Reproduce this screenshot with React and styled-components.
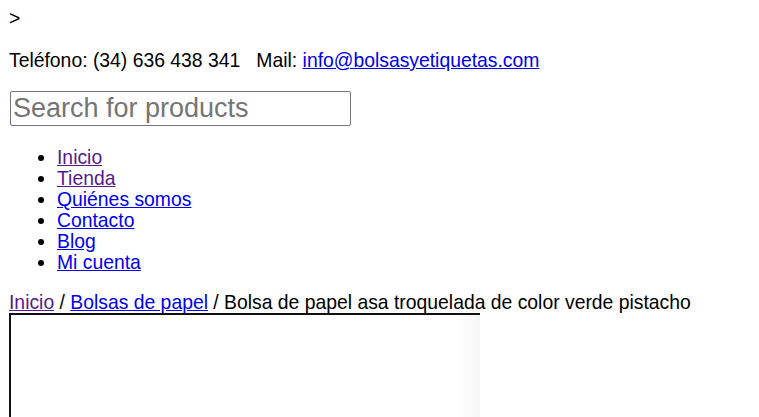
import React from 'react';
import styled, { createGlobalStyle } from 'styled-components';

const GlobalStyle = createGlobalStyle`
  body {
    margin: 8px;
    background: #fff;
    color: #000;
    font-family: "Liberation Sans", Arial, sans-serif;
    font-size: 19.35px;
    line-height: 21px;
  }
`;

const navItems = [
  { label: 'Inicio', visited: true },
  { label: 'Tienda', visited: true },
  { label: 'Quiénes somos' },
  { label: 'Contacto' },
  { label: 'Blog' },
  { label: 'Mi cuenta' },
];

const App = () => {
  return (
    <>
      <GlobalStyle />
      <Header>
        <Toggle>&gt;</Toggle>
        <Contact>
          Teléfono: (34) 636 438 341{'\u00a0\u00a0\u00a0'}Mail:{' '}
          <Link href="#">info@bolsasyetiquetas.com</Link>
        </Contact>
        <SearchForm onSubmit={(e) => e.preventDefault()}>
          <SearchInput type="search" placeholder="Search for products" />
        </SearchForm>
        <NavList>
          {navItems.map((item) => (
            <li key={item.label}>
              <Link href="#" $visited={item.visited}>
                {item.label}
              </Link>
            </li>
          ))}
        </NavList>
      </Header>
      <Breadcrumb>
        <Link href="#" $visited>
          Inicio
        </Link>{' '}
        /{' '}
        <Link href="#">Bolsas de papel</Link> / Bolsa de papel asa troquelada
        de color verde pistacho
      </Breadcrumb>
      <ProductImage aria-label="Bolsa de papel asa troquelada de color verde pistacho" />
    </>
  );
};

export default App;

const Header = styled.header`
  display: block;
`;

const Toggle = styled.div`
  height: 21px;
  padding-left: 1px;
`;

const Contact = styled.p`
  margin: 21px 0 20px;
  padding-left: 1px;
`;

const Link = styled.a`
  color: ${(p) => (p.$visited ? '#551a8b' : '#0000ee')};
  text-decoration: underline;
`;

const SearchForm = styled.form`
  margin: 0;
`;

const SearchInput = styled.input`
  box-sizing: border-box;
  width: 341px;
  height: 35px;
  margin: 0 0 0 2px;
  padding: 0 2px;
  border: 1px solid #767676;
  border-radius: 2px;
  font-family: "Liberation Sans", Arial, sans-serif;
  font-size: 27px;
  -webkit-appearance: none;
  appearance: none;

  &::placeholder {
    color: #757575;
  }
`;

const NavList = styled.ul`
  margin: 21px 0 19px;
  padding-left: 49px;
  list-style: disc;
`;

const Breadcrumb = styled.nav`
  display: block;
  padding-left: 1px;
`;

const ProductImage = styled.div`
  box-sizing: border-box;
  width: 471px;
  height: 471px;
  margin-left: 1px;
  border-top: 2px solid #111;
  border-left: 2px solid #111;
  background: linear-gradient(to right, #fff 0%, #fff 95%, #f6f6f6 100%);
`;
